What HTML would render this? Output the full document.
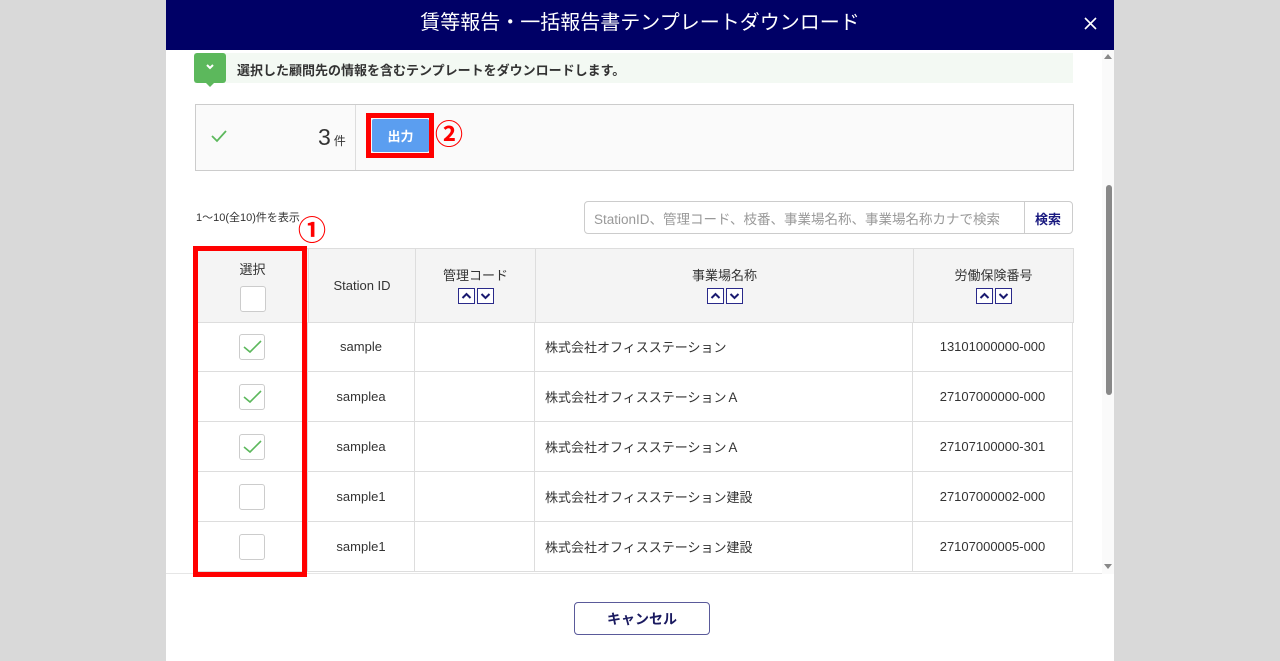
<!DOCTYPE html>
<html><head><meta charset="utf-8"><style>
*{box-sizing:border-box;margin:0;padding:0}
body{width:1280px;height:661px;overflow:hidden;background:#d9d9d9;font-family:"Liberation Sans","Noto Sans CJK JP",sans-serif;color:#333;position:relative}
.a{position:absolute}
#modal{left:166px;top:0;width:948px;height:661px;background:#fff}
#hdr{left:0;top:0;width:948px;height:50px;background:#000066;color:#fff;font-size:20px;text-align:center;line-height:46px}
.c{display:flex;align-items:center;justify-content:center;font-size:13px;color:#333}
.cell{position:absolute;border-right:1px solid #ddd;border-bottom:1px solid #ddd}
.sort{display:inline-block;width:17px;height:16px;border:1px solid #2a2a8a;margin:0 1px;vertical-align:middle;background:#fff;position:relative}
.sort svg{position:absolute;left:2px;top:2px}
</style></head><body>
<div id="modal" class="a">
 <div id="hdr" class="a">賃等報告・一括報告書テンプレートダウンロード<svg class="a" style="right:17px;top:17px" width="13" height="13"><path d="M1 1 L12 12 M12 1 L1 12" stroke="#fff" stroke-width="1.6"/></svg></div>
 <div class="a" style="left:28px;top:53px;width:879px;height:30px;background:#f3f9f3"></div>
 <div class="a" style="left:28px;top:53px;width:32px;height:30px;background:#5cb85c;border-radius:3px"></div>
 <div class="a" style="left:39px;top:82px;width:0;height:0;border-left:5px solid transparent;border-right:5px solid transparent;border-top:5px solid #5cb85c"></div>
 <svg class="a" style="left:38px;top:62px" width="12" height="10"><path d="M3 3 L6 6 L9 3" stroke="#fff" stroke-width="2" fill="none"/></svg>
 <div class="a" style="left:71px;top:60px;font-size:13px;font-weight:bold;color:#333">選択した顧問先の情報を含むテンプレートをダウンロードします。</div>
 <div class="a" style="left:29px;top:104px;width:879px;height:67px;border:1px solid #ccc;background:#fafafa"></div>
 <div class="a" style="left:189px;top:105px;width:1px;height:65px;background:#ddd"></div>
 <svg class="a" style="left:44px;top:129px" width="18" height="14"><path d="M2 7 L7 12 L16 2" stroke="#5cb85c" stroke-width="1.8" fill="none"/></svg>
 <div class="a" style="left:152px;top:124px;font-size:23px;color:#333">3<span style="font-size:12px;margin-left:3px">件</span></div>
 <div class="a" style="left:200px;top:113px;width:68px;height:45px;border:5px solid #f00"></div>
 <div class="a c" style="left:206px;top:119px;width:57px;height:33px;background:#5b9ef0;color:#fff;font-weight:bold;border-radius:2px">出力</div>
 <div class="a" style="left:269px;top:119px;font-size:28px;line-height:32px;color:#f00;font-weight:bold">②</div>
 <div class="a" style="left:30px;top:209px;font-size:11px;color:#333">1〜10(全10)件を表示</div>
 <div class="a" style="left:132px;top:215px;font-size:28px;line-height:32px;color:#f00;font-weight:bold">①</div>
 <div class="a" style="left:418px;top:201px;width:489px;height:33px;border:1px solid #ccc;border-radius:4px;background:#fff"></div>
 <div class="a" style="left:428px;top:208px;font-size:13.5px;color:#999">StationID、管理コード、枝番、事業場名称、事業場名称カナで検索</div>
 <div class="a" style="left:858px;top:202px;width:1px;height:31px;background:#ccc"></div>
 <div class="a" style="left:869px;top:209px;font-size:13px;font-weight:bold;color:#1a1a80">検索</div>
 <div class="a" style="left:30px;top:248px;width:878px;height:326px;border-top:1px solid #ddd;border-left:1px solid #ddd;overflow:hidden">
  <div class="a" style="left:0;top:0;width:877px;height:73px;background:#f4f4f4"></div>
  <div class="cell c" style="left:0;top:0;width:112px;height:74px;flex-direction:column;justify-content:flex-start;padding-top:10px">選択<div style="width:26px;height:26px;border:1px solid #ccc;border-radius:3px;background:#fff;margin-top:8px"></div></div>
  <div class="cell c" style="left:112px;top:0;width:107px;height:74px">Station ID</div>
  <div class="cell c" style="left:219px;top:0;width:120px;height:74px;flex-direction:column;justify-content:flex-start;padding-top:16px">管理コード<div style="margin-top:3px" class="srt"></div></div>
  <div class="cell c" style="left:339px;top:0;width:378px;height:74px;flex-direction:column;justify-content:flex-start;padding-top:16px">事業場名称<div style="margin-top:3px" class="srt"></div></div>
  <div class="cell c" style="left:717px;top:0;width:160px;height:74px;flex-direction:column;justify-content:flex-start;padding-top:16px">労働保険番号<div style="margin-top:3px" class="srt"></div></div>
 </div>
 <div class="a" style="left:27px;top:246px;width:114px;height:331px;border:5px solid #f00;z-index:5"></div>
 <div class="a" style="left:0;top:573px;width:936px;height:1px;background:#e6e6e6"></div>
 <div class="a c" style="left:408px;top:602px;width:136px;height:33px;border:1.5px solid #5a5a9a;border-radius:4px;font-weight:bold;font-size:14px;color:#1a1a60">キャンセル</div>
 <div class="a" style="left:936px;top:50px;width:12px;height:524px;background:#fafafa"></div>
 <div class="a" style="left:940px;top:185px;width:6px;height:210px;background:#888;border-radius:3px"></div>
 <div class="a" style="left:938px;top:54px;width:0;height:0;border-left:4px solid transparent;border-right:4px solid transparent;border-bottom:5px solid #888"></div>
 <div class="a" style="left:938px;top:564px;width:0;height:0;border-left:4px solid transparent;border-right:4px solid transparent;border-top:5px solid #888"></div>
</div>
<script>
var s='<span class="sort"><svg width="11" height="10"><path d="M1.5 7 L5.5 3 L9.5 7" stroke="#1a1a70" stroke-width="2" fill="none"/></svg></span><span class="sort"><svg width="11" height="10"><path d="M1.5 3 L5.5 7 L9.5 3" stroke="#1a1a70" stroke-width="2" fill="none"/></svg></span>';
document.querySelectorAll('.srt').forEach(function(e){e.innerHTML=s;});
var d=[["sample","株式会社オフィスステーション","13101000000-000",1],["samplea","株式会社オフィスステーションＡ","27107000000-000",1],["samplea","株式会社オフィスステーションＡ","27107100000-301",1],["sample1","株式会社オフィスステーション建設","27107000002-000",0],["sample1","株式会社オフィスステーション建設","27107000005-000",0]];
var h="";d.forEach(function(r,i){var t=322+i*50,L=196;
function cell(l,w,c,s){return '<div class="cell c" style="position:absolute;left:'+(l)+'px;top:'+t+'px;width:'+w+'px;height:'+Math.min(50,573-t)+'px;'+(s||'')+'">'+c+'</div>';}
h+=cell(L,112,'<div style="position:relative;width:26px;height:26px;border:1px solid #ccc;border-radius:3px;background:#fff">'+(r[3]?'<svg style="position:absolute;left:3px;top:5px" width="19" height="14"><path d="M1 7 L7 12 L18 1" stroke="#5cb85c" stroke-width="1.6" fill="none"/></svg>':'')+'</div>','border-left:1px solid #ddd');
h+=cell(L+112,107,r[0]);h+=cell(L+219,120,'');h+=cell(L+339,378,r[1],'justify-content:flex-start;padding-left:10px');h+=cell(L+717,160,r[2]);});
document.body.insertAdjacentHTML('beforeend',h);
</script>
</body></html>
